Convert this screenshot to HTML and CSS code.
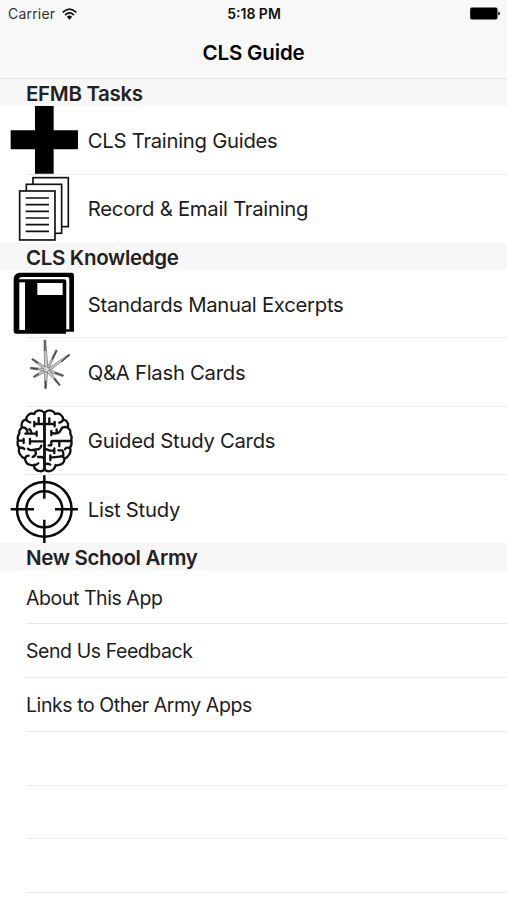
FILE: index.html
```html
<!DOCTYPE html>
<html lang="en">
<head>
    <meta charset="utf-8" />
    <title>CLS Guide</title>
    <link rel="stylesheet" href="styles.css">
</head>
<body>
    <div class="navbar">
        <div class="status">
            <div class="carrier">
                <span>Carrier</span>
                <svg class="wifi" viewBox="0 0 44 34">
                    <path d="M2 12 Q22 -7 42 12" fill="none" stroke="#111" stroke-width="5" />
                    <path d="M9 20 Q22 8 35 20" fill="none" stroke="#111" stroke-width="5" />
                    <path d="M14 25 Q22 18 30 25 L22 34 Z" fill="#111" />
                </svg>
            </div>
            <div class="time">5:18 PM</div>
            <svg class="battery" viewBox="0 0 90 38">
                <rect x="0.5" y="1" width="82" height="36" rx="5" fill="#000" />
                <path d="M85 13 Q90 15 90 19 Q90 23 85 25 Z" fill="#000" />
            </svg>
        </div>
        <h1>CLS Guide</h1>
    </div>

    <h2>EFMB Tasks</h2>
    <ul class="big">
        <li>
            <svg class="icon" viewBox="30 18 205 205">
                <path d="M105 18H161V91H234V148H161V221H105V148H32V91H105Z" />
            </svg>
            <span>CLS Training Guides</span>
        </li>
        <li>
            <svg class="icon" viewBox="30 223 205 205">
                <g fill="#fff" stroke="#111" stroke-width="5">
                    <rect x="99" y="231" width="106" height="147" />
                    <rect x="79" y="251" width="106" height="147" />
                    <rect x="59" y="271" width="106" height="147" />
                </g>
                <path d="M77 292H147M77 312H147M77 332H147M77 352H147M77 372H147M77 392H147" stroke="#111" stroke-width="5" />
            </svg>
            <span>Record &amp; Email Training</span>
        </li>
    </ul>

    <h2>CLS Knowledge</h2>
    <ul class="big">
        <li>
            <svg class="icon" viewBox="30 15 205 205">
                <path d="M57 23H215Q222 23 222 30V200H198V206H49Q41 206 41 198V40Q43 26 57 23Z" />
                <path d="M56 43Q58 36 67 36H203Q208 36 208 42V193H199V49Q199 43 192 43Z" fill="#fff" />
                <rect x="58" y="52" width="17" height="143" fill="#fff" />
                <rect x="112" y="54" width="76" height="36" fill="#fff" />
            </svg>
            <span>Standards Manual Excerpts</span>
        </li>
        <li>
            <svg class="icon" viewBox="30 9 205 205">
                <!-- spikes -->
                <g fill="#ccc" stroke="#555" stroke-width="1.8">
                    <path d="M132 15H137L144 102L134 103Z" />
                    <path d="M167 45L172 47L147 100L142 98Z" />
                    <path d="M207 57L210 61L146 109L143 102Z" />
                    <path d="M190 120L189 125L143 110L146 103Z" />
                    <path d="M181 149L178 152L140 110L146 104Z" />
                    <path d="M134 161H139L143 106L134 104Z" />
                    <path d="M100 124L103 128L140 109L137 102Z" />
                    <path d="M91 97V102L137 108L139 101Z" />
                    <path d="M98 70L95 74L136 105L141 99Z" />
                </g>
                <path d="M135 16V48M170 46L157 73M208 59L184 80M190 122L164 113M179 151L163 130M137 160V137M101 126L116 116M92 99L114 102M97 72L115 85" stroke="#444" stroke-width="4" />
                <circle cx="140" cy="103" r="6" fill="#ddd" />
            </svg>
            <span>Q&amp;A Flash Cards</span>
        </li>
        <li>
            <svg class="icon" viewBox="30 19 205 205">
                <g fill="none" stroke="#111" stroke-width="7" stroke-linecap="round" stroke-linejoin="round">
                    <!-- left half -->
                    <path d="M133 36Q122 25 109 32Q104 35 103 40Q91 36 84 44Q78 49 79 56Q67 58 65 70Q64 75 66 80Q56 88 58 99Q51 108 54 118Q50 132 58 141Q54 154 61 162Q65 171 75 174Q77 190 91 193Q97 195 101 193Q103 207 116 211Q127 214 133 207Z" />
                    <path d="M133 70H103M103 64V77M116 70V52" />
                    <path d="M79 57Q82 64 91 65M67 80Q78 79 82 91V98M76 99H108M110 93V105M95 99Q94 89 88 85" />
                    <path d="M133 122H90M90 115V129M58 120H70M71 115V127" />
                    <path d="M59 142Q67 140 73 145M84 144Q89 150 99 148L117 145Q123 141 124 135M105 148L108 158Q106 167 98 169M75 174Q77 165 86 165M114 169H124Q133 170 133 178M101 193Q110 194 115 188" />
                    <!-- right half -->
                    <path d="M134 36Q145 25 158 32Q164 35 165 40Q176 36 184 44Q190 49 189 56Q201 58 204 70Q205 76 203 80Q213 88 211 99Q217 108 214 118Q217 132 210 141Q214 154 207 162Q203 171 194 174Q192 190 178 193Q171 195 167 193Q164 207 152 211Q141 214 134 207Z" />
                    <path d="M134 70H163M164 64V77M148 70V53M189 57Q188 64 178 66" />
                    <path d="M203 80Q190 77 185 83L179 94Q170 101 154 97M154 91V104M170 97V86" />
                    <path d="M211 121H157Q153 121 154 128V134H146M178 121V136" />
                    <path d="M134 144L150 150H163M163 143V157M209 142Q198 139 195 146M175 149H187Q191 154 190 165M194 174Q188 164 179 168L151 171M151 164V179M134 192Q143 187 151 192" />
                </g>
            </svg>
            <span>Guided Study Cards</span>
        </li>
        <li>
            <svg class="icon" viewBox="30 14 205 205">
                <g fill="none" stroke="#0a0a0a" stroke-width="7.5">
                    <circle cx="133" cy="117" r="82" />
                    <circle cx="133" cy="117" r="54" />
                    <path d="M32 117H102M165 117H234M133 15V85M133 148V218" />
                </g>
            </svg>
            <span>List Study</span>
        </li>
    </ul>

    <h2>New School Army</h2>
    <ul class="small">
        <li>About This App</li>
        <li>Send Us Feedback</li>
        <li>Links to Other Army Apps</li>
        <li></li>
        <li></li>
        <li></li>
    </ul>
</body>
</html>
```
FILE: styles.css
```css
* {
    margin: 0;
    padding: 0;
    box-sizing: border-box;
}

body {
    height: 900px;
    background-color: #fff;
    color: #1c1c1c;
    font-family: Inter, "Liberation Sans", sans-serif;
}

ul {
    list-style: none;
}

.navbar {
    height: 79.2px;
    background-color: #f8f8f8;
    border-bottom: 1px solid #e2e2e2;
}

.status {
    display: grid;
    grid-template-columns: 1fr auto 1fr;
    align-items: center;
    height: 27px;
    padding: 0 7px 0 8px;
    font-size: 14px;
}

.carrier {
    display: flex;
    align-items: center;
    gap: 7px;
    color: #333;
    letter-spacing: 0.2px;
}

.wifi {
    width: 15px;
    height: 12px;
}

.time {
    color: #111;
    font-weight: 600;
}

.battery {
    justify-self: end;
    width: 30px;
    height: 13px;
}

h1 {
    color: #000;
    font-size: 20.5px;
    font-weight: 600;
    line-height: 51px;
    text-align: center;
    letter-spacing: -0.15px;
}

h2 {
    height: 27.2px;
    padding-left: 26px;
    background-color: #f7f7f7;
    color: #222;
    font-size: 20.5px;
    font-weight: 600;
    line-height: 29px;
    letter-spacing: -0.33px;
}

.big li {
    display: flex;
    align-items: center;
    height: 68.3px;
    padding-left: 10px;
    /* hairline starts at the text inset, not at the screen edge */
    background: linear-gradient(#e9e9e9, #e9e9e9) 26px 100% / 100% 1px no-repeat;
}

    .big li:last-child {
        background: none;
    }

    .big span {
        padding-bottom: 0.4px;
        font-size: 20.3px;
        letter-spacing: -0.27px;
        white-space: nowrap;
    }

.icon {
    width: 68.3px;
    height: 68.3px;
    margin-right: 9.5px;
    flex: none;
}

.small li {
    display: flex;
    align-items: center;
    height: 53.75px;
    margin-left: 26px;
    padding-top: 1.5px;
    border-bottom: 1px solid #e9e9e9;
    font-size: 19.5px;
    letter-spacing: -0.43px;
}
```
